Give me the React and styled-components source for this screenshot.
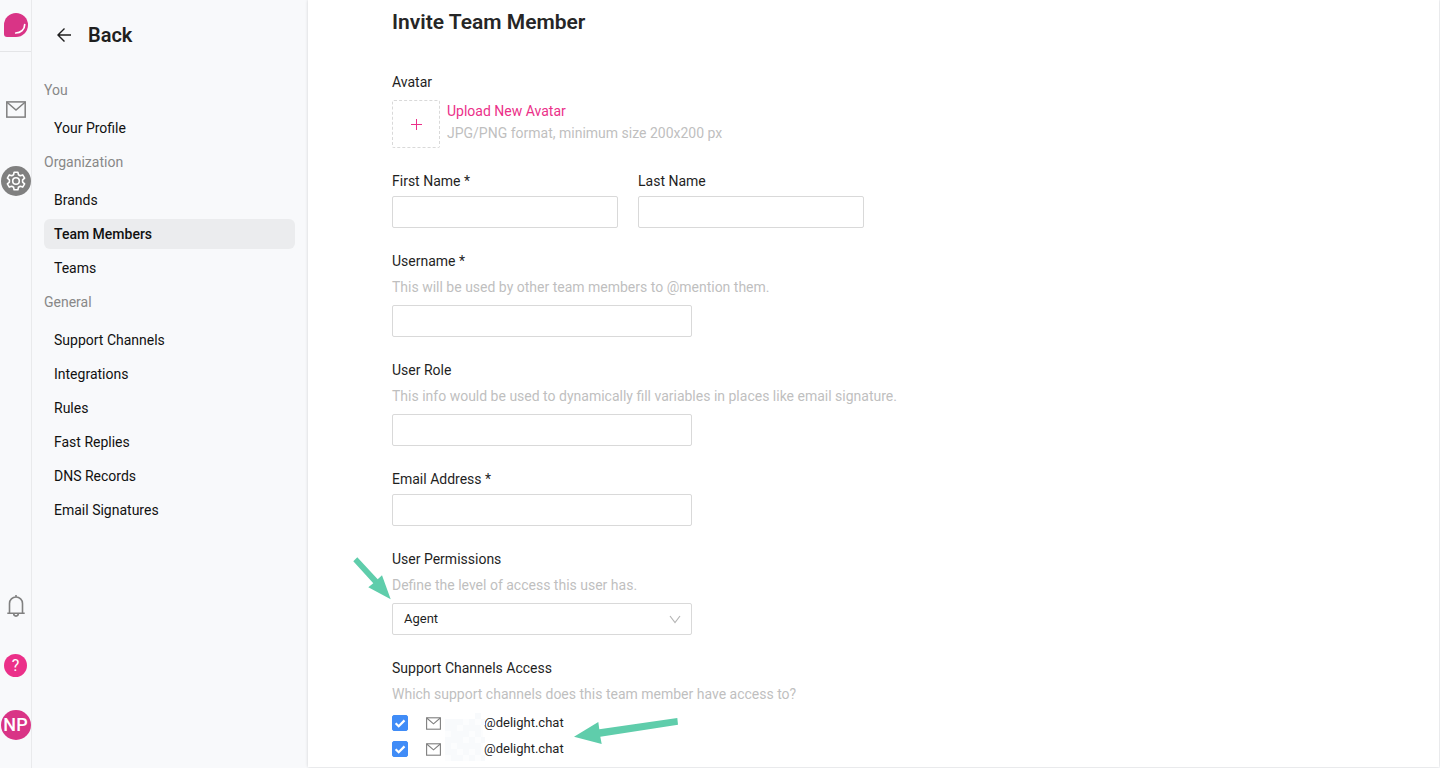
import React, { useState } from "react";
import styled, { createGlobalStyle } from "styled-components";

const sections = [
  { title: "You", items: ["Your Profile"] },
  { title: "Organization", items: ["Brands", "Team Members", "Teams"] },
  {
    title: "General",
    items: [
      "Support Channels",
      "Integrations",
      "Rules",
      "Fast Replies",
      "DNS Records",
      "Email Signatures",
    ],
  },
];

const channels = [
  { id: "channel-1", domain: "@delight.chat" },
  { id: "channel-2", domain: "@delight.chat" },
];

// [column, row] of the tinted cells that hide the mailbox name
const maskCells = [
  [5, 0], [0, 1], [1, 1], [2, 1], [4, 1], [6, 1], [0, 2], [1, 2], [3, 2],
  [4, 2], [5, 2], [1, 3], [2, 3], [3, 3], [5, 3], [0, 4], [1, 4], [2, 4],
  [4, 4], [6, 4], [0, 5], [2, 5], [3, 5], [4, 5], [5, 5], [0, 6], [1, 6],
  [3, 6], [5, 6], [1, 7], [2, 7], [4, 7], [6, 7],
];

const MailIcon = ({ width, height }) => (
  <svg width={width} height={height} viewBox="0 0 20 17" fill="none" stroke="currentColor" strokeWidth="1.5" aria-hidden="true">
    <rect x="0.8" y="0.9" width="18.4" height="15.2" />
    <path d="M1 1.2L10 9L19 1.2" />
  </svg>
);

const GearIcon = () => (
  <svg width="20" height="20" viewBox="0 0 20 20" fill="none" stroke="currentColor" strokeWidth="1.6" strokeLinejoin="round" aria-hidden="true">
    <path d="M8.1 1.2h3.8l.5 2.5 1.9 1.1 2.4-.9 1.9 3.3-2 1.7v2.2l2 1.7-1.9 3.3-2.4-.9-1.9 1.1-.5 2.5H8.1l-.5-2.5-1.9-1.1-2.4.9-1.9-3.3 2-1.7V8.9l-2-1.7 1.9-3.3 2.4.9 1.9-1.1z" />
    <circle cx="10" cy="10" r="3.3" />
  </svg>
);

const BellIcon = () => (
  <svg width="20" height="24" viewBox="0 0 20 24" fill="none" stroke="currentColor" strokeWidth="1.6" aria-hidden="true">
    <path d="M10 1v2M3.5 19V9.5a6.500 6.500 0 0 1 13 0V19M1.300 19.300h17.400M7.700 19.600a2.300 2.500 0 0 0 4.600 0" />
  </svg>
);

const App = () => {
  const [active, setActive] = useState("Team Members");

  return (
    <>
      <GlobalStyle />
      <Page>
        <Rail>
          <Logo href="#" aria-label="Home">
            <svg width="24" height="24" viewBox="0 0 24 24">
              <path d="M12 0a12 12 0 0 1 0 24H3a3 3 0 0 1-3-3v-9A12 12 0 0 1 12 0z" fill="#d93486" />
              <path d="M20.700 11.500c0 5-4 8.500-9 8.500" fill="none" stroke="#fff" strokeWidth="1.700" strokeLinecap="round" />
            </svg>
          </Logo>
          <RailTop>
            <RailButton aria-label="Inbox">
              <MailIcon width={20} height={17} />
            </RailButton>
            <RailButton aria-label="Settings" $selected>
              <GearIcon />
            </RailButton>
          </RailTop>
          <RailBottom>
            <RailButton aria-label="Notifications">
              <BellIcon />
            </RailButton>
            <HelpButton aria-label="Help">?</HelpButton>
            <UserButton>NP</UserButton>
          </RailBottom>
        </Rail>

        <Sidebar>
          <BackButton>
            <svg width="14" height="14" viewBox="0 0 14 14" fill="none" stroke="currentColor" strokeWidth="1.4" aria-hidden="true">
              <path d="M14 7H1M7.500 0.600L1 7l6.500 6.400" />
            </svg>
            Back
          </BackButton>
          {sections.map((section) => (
            <Section key={section.title}>
              <SectionTitle>{section.title}</SectionTitle>
              <SectionList>
                {section.items.map((item) => (
                  <li key={item}>
                    <NavLink href="#" $active={item === active} onClick={() => setActive(item)}>
                      {item}
                    </NavLink>
                  </li>
                ))}
              </SectionList>
            </Section>
          ))}
        </Sidebar>

        <Main>
          <Title>Invite Team Member</Title>
          <Form>
            <Field>
              <Label as="span">Avatar</Label>
              <AvatarRow>
                <AvatarButton aria-label="Add avatar">
                  <svg width="11" height="11" viewBox="0 0 11 11" stroke="currentColor" aria-hidden="true">
                    <path d="M5.500 0v11M0 5.500h11" />
                  </svg>
                </AvatarButton>
                <div>
                  <UploadLink href="#">Upload New Avatar</UploadLink>
                  <Hint>JPG/PNG format, minimum size 200x200 px</Hint>
                </div>
              </AvatarRow>
            </Field>

            <NameRow>
              <Field>
                <Label htmlFor="first-name">First Name *</Label>
                <Input id="first-name" />
              </Field>
              <Field>
                <Label htmlFor="last-name">Last Name</Label>
                <Input id="last-name" />
              </Field>
            </NameRow>

            <Field>
              <Label htmlFor="username">Username *</Label>
              <FieldHint>This will be used by other team members to @mention them.</FieldHint>
              <Input id="username" />
            </Field>

            <Field>
              <Label htmlFor="role">User Role</Label>
              <FieldHint>
                This info would be used to dynamically fill variables in places like email signature.
              </FieldHint>
              <Input id="role" />
            </Field>

            <Field>
              <Label htmlFor="email">Email Address *</Label>
              <Input id="email" type="email" />
            </Field>

            <Field>
              <Label htmlFor="permissions">User Permissions</Label>
              <FieldHint>Define the level of access this user has.</FieldHint>
              <SelectBox>
                <Select id="permissions" defaultValue="Agent">
                  <option>Agent</option>
                  <option>Admin</option>
                </Select>
                <svg width="12" height="10" viewBox="0 0 12 10" fill="none" stroke="#b5b5b5" strokeWidth="1.2" aria-hidden="true">
                  <path d="M1 2l5 6.500L11 2" />
                </svg>
              </SelectBox>
              <SelectArrow width="40" height="44" viewBox="352 556 40 44" aria-hidden="true">
                <path d="M357.300 557.300L377.700 579.300L382 575.300L390.700 599.300L368.300 587.300L373.300 583.300L353.300 561.300z" />
              </SelectArrow>
            </Field>

            <Field>
              <Label as="span">Support Channels Access</Label>
              <FieldHint>Which support channels does this team member have access to?</FieldHint>
              <ChannelGroup>
                <Mask width="40" height="48" viewBox="0 0 40 48" aria-hidden="true">
                  <rect y="6" width="38" height="42" fill="#fcfdfe" />
                  {maskCells.map(([col, row]) => (
                    <rect key={`${col}-${row}`} x={col * 6} y={row * 6} width="6" height="6" fill="#f8fafc" />
                  ))}
                </Mask>
                <ChannelList>
                  {channels.map((channel) => (
                    <Channel key={channel.id} htmlFor={channel.id}>
                      <Tick>
                        <input id={channel.id} type="checkbox" defaultChecked />
                        <svg width="16" height="16" viewBox="0 0 16 16" fill="none" stroke="#fff" strokeWidth="2.2" aria-hidden="true">
                          <path d="M3.600 8.200l3.100 3 5.800-5.800" />
                        </svg>
                      </Tick>
                      <MailIcon width={15} height={13} />
                      <Domain>{channel.domain}</Domain>
                    </Channel>
                  ))}
                </ChannelList>
              </ChannelGroup>
              <ChannelArrow width="108" height="30" viewBox="572 716 108 30" aria-hidden="true">
                <path d="M574 736.700L598.300 722L599.300 729.300L677.300 718L678 724.700L600.300 736.700L601.700 744z" />
              </ChannelArrow>
            </Field>
          </Form>
        </Main>
      </Page>
    </>
  );
};

export default App;

const GlobalStyle = createGlobalStyle`
  * {
    box-sizing: border-box;
  }
  body {
    margin: 0;
    color: #1f1f1f;
    font: 14px/22px Roboto, "Liberation Sans", sans-serif;
  }
  button, input, select {
    font: inherit;
    color: inherit;
  }
  svg {
    display: block;
    flex: none;
  }
`;

const Page = styled.div`
  display: flex;
  height: 100vh;
  overflow: hidden;
  background: #f8f9fb;
`;

const Rail = styled.nav`
  flex: none;
  width: 32px;
  display: flex;
  flex-direction: column;
  border-right: 1px solid #e9eaec;
`;

const Logo = styled.a`
  display: flex;
  justify-content: center;
  padding: 13px 0 14px;
  border-bottom: 1px solid #e4e5e7;
`;

const RailTop = styled.div`
  display: flex;
  flex-direction: column;
  align-items: center;
  gap: 42px;
  padding-top: 42px;
`;

const RailBottom = styled(RailTop)`
  gap: 33px;
  margin-top: auto;
  padding: 0 0 28px;
`;

const RailButton = styled.button`
  flex: none;
  width: 30px;
  height: 30px;
  display: flex;
  align-items: center;
  justify-content: center;
  padding: 0;
  border: none;
  border-radius: 50%;
  background: ${(props) => (props.$selected ? "#808080" : "none")};
  color: ${(props) => (props.$selected ? "#fff" : "#808080")};
  cursor: pointer;
`;

const HelpButton = styled(RailButton)`
  width: 23px;
  height: 23px;
  background: #eb3089;
  color: #fff;
  font-size: 16px;
`;

const UserButton = styled(RailButton)`
  background: #d93486;
  color: #fff;
  font-size: 18px;
  font-weight: 500;
`;

const Sidebar = styled.aside`
  flex: none;
  width: 276px;
  padding: 19px 13px 0 12px;
`;

const BackButton = styled.button`
  display: flex;
  align-items: center;
  gap: 17px;
  margin-bottom: 20px;
  padding: 0 13px;
  border: none;
  background: none;
  font-size: 20px;
  line-height: 32px;
  font-weight: 600;
  cursor: pointer;
`;

const Section = styled.section`
  padding-top: 8px;
`;

const SectionTitle = styled.h2`
  margin: 0 0 12px;
  font-size: 14px;
  font-weight: 400;
  color: #888;
`;

const SectionList = styled.ul`
  display: flex;
  flex-direction: column;
  gap: 4px;
  margin: 0;
  padding: 0;
  list-style: none;
`;

const NavLink = styled.a`
  display: block;
  padding: 4px 10px;
  border-radius: 6px;
  background: ${(props) => (props.$active ? "#ebecee" : "none")};
  font-weight: ${(props) => (props.$active ? 500 : 400)};
  color: #111;
  text-decoration: none;
`;

const Main = styled.main`
  flex: 1;
  min-width: 0;
  margin: 0 1px 1px 0;
  padding: 6px 84px 0;
  overflow: hidden;
  background: #fff;
  box-shadow: 0 0 3px rgba(0, 0, 0, 0.16);
`;

const Title = styled.h1`
  margin: 0 0 33px;
  font-size: 21px;
  line-height: 32px;
  font-weight: 600;
  color: #262626;
`;

const Form = styled.form`
  display: flex;
  flex-direction: column;
  gap: 22px;
`;

const Field = styled.div`
  position: relative;
`;

const Label = styled.label`
  display: block;
  margin-bottom: 4px;
`;

const Hint = styled.p`
  margin: 0;
  color: #bfbfbf;
`;

const FieldHint = styled(Hint)`
  margin-bottom: 7px;
`;

const AvatarRow = styled.div`
  display: flex;
  gap: 7px;
  padding-top: 3px;
`;

const AvatarButton = styled.button`
  width: 48px;
  height: 48px;
  display: flex;
  align-items: center;
  justify-content: center;
  padding: 0;
  border: 1px dashed #d9d9d9;
  border-radius: 2px;
  background: #fff;
  color: #eb3089;
  cursor: pointer;
`;

const UploadLink = styled.a`
  color: #eb3089;
  text-decoration: none;
`;

const NameRow = styled.div`
  display: grid;
  grid-template-columns: 1fr 1fr;
  gap: 20px;
  max-width: 472px;
`;

const Input = styled.input`
  display: block;
  width: 100%;
  max-width: 300px;
  height: 32px;
  padding: 4px 11px;
  border: 1px solid #d9d9d9;
  border-radius: 2px;
  background: #fff;
`;

const SelectBox = styled.div`
  display: grid;
  align-items: center;
  max-width: 300px;
  svg {
    grid-area: 1 / 1;
    justify-self: end;
    margin-right: 11px;
    pointer-events: none;
  }
`;

const Select = styled.select`
  grid-area: 1 / 1;
  appearance: none;
  height: 32px;
  padding: 0 11px;
  border: 1px solid #d9d9d9;
  border-radius: 2px;
  background: #fff;
  font-size: 13px;
`;

const SelectArrow = styled.svg`
  position: absolute;
  top: 8px;
  left: -40px;
  fill: #5fcdab;
`;

const ChannelArrow = styled(SelectArrow)`
  top: 59px;
  left: 180px;
`;

const ChannelGroup = styled.div`
  position: relative;
`;

const Mask = styled.svg`
  position: absolute;
  top: 1px;
  left: 53px;
`;

const ChannelList = styled.div`
  display: flex;
  flex-direction: column;
  gap: 4px;
`;

const Channel = styled.label`
  display: flex;
  align-items: center;
  color: #808080;
  cursor: pointer;
`;

const Tick = styled.span`
  display: grid;
  margin-right: 18px;
  input {
    grid-area: 1 / 1;
    appearance: none;
    width: 16px;
    height: 16px;
    margin: 0;
    border: 1px solid #408cf7;
    border-radius: 2px;
    background: #fff;
  }
  input:checked {
    background: #408cf7;
  }
  svg {
    grid-area: 1 / 1;
    pointer-events: none;
  }
`;

const Domain = styled.span`
  margin-left: 43px;
  font-size: 13px;
  color: #1f1f1f;
`;
